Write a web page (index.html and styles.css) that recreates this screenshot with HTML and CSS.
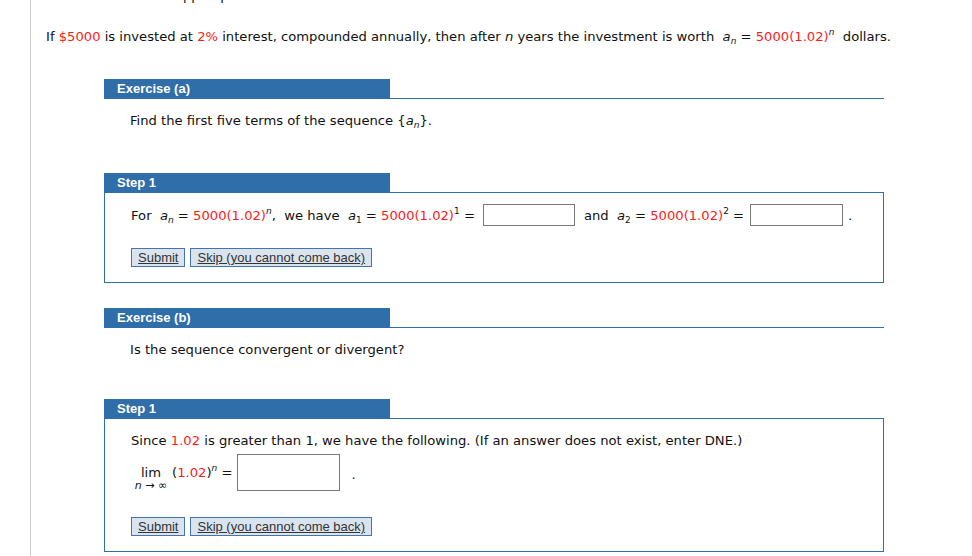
FILE: index.html
```html
<!DOCTYPE html>
<html>
<head>
<meta charset="utf-8">
<link rel="stylesheet" href="styles.css">
</head>
<body>
<div class="page">
  <p class="cut">come back to the skipped part.</p>
  <p class="intro">If <span class="r">$5000</span> is invested at <span class="r">2%</span> interest, compounded annually, then after <i>n</i> years the investment is worth &nbsp;<i>a</i><sub><i>n</i></sub> = <span class="r">5000(1.02)</span><sup><i>n</i></sup>&nbsp; dollars.</p>

  <section class="exercise ex-a">
    <div class="ex-head"><div class="bar">Exercise (a)</div></div>
    <p class="prompt">Find the first five terms of the sequence {<i>a</i><sub><i>n</i></sub>}.</p>
    <div class="step">
      <div class="bar">Step 1</div>
      <div class="box">
        <div class="row">
          <span>For &nbsp;<i>a</i><sub><i>n</i></sub> = <span class="r">5000(1.02)</span><sup><i>n</i></sup>, &nbsp;we have &nbsp;<i>a</i><sub>1</sub> = <span class="r">5000(1.02)</span><sup>1</sup> =</span>
          <span class="inp w1"></span>
          <span class="and">and &nbsp;<i>a</i><sub>2</sub> = <span class="r">5000(1.02)</span><sup>2</sup> =</span>
          <span class="inp w2"></span>
          <span class="dot">.</span>
        </div>
        <div class="btns">
          <span class="btn">Submit</span>
          <span class="btn">Skip (you cannot come back)</span>
        </div>
      </div>
    </div>
  </section>

  <section class="exercise ex-b">
    <div class="ex-head"><div class="bar">Exercise (b)</div></div>
    <p class="prompt">Is the sequence convergent or divergent?</p>
    <div class="step step-b">
      <div class="bar">Step 1</div>
      <div class="box">
        <p class="since">Since <span class="r">1.02</span> is greater than 1, we have the following. (If an answer does not exist, enter DNE.)</p>
        <div class="limrow">
          <span class="lim"><span class="lim-top">lim</span><span class="lim-sub"><i>n</i>&nbsp;→&nbsp;∞</span></span>
          <span class="limexpr">(<span class="r">1.02</span>)<sup><i>n</i></sup> =</span>
          <span class="inp w3"></span>
          <span class="dot2">.</span>
        </div>
        <div class="btns">
          <span class="btn">Submit</span>
          <span class="btn">Skip (you cannot come back)</span>
        </div>
      </div>
    </div>
  </section>
</div>
</body>
</html>
```

FILE: styles.css
```css
html, body {
  margin: 0;
  padding: 0;
  background: #fff;
}
body {
  font-family: "DejaVu Sans", Verdana, sans-serif;
  font-size: 13.15px;
  color: #111;
}
.page {
  margin-left: 30px;
  border-left: 1px solid #cccccc;
  padding-left: 15px;
  min-height: 556px;
  box-sizing: border-box;
  overflow: hidden;
}
p { margin: 0; }
.cut {
  line-height: 16px;
  margin-top: -12px;
}
.intro {
  line-height: 16px;
  margin-top: 25px;
  white-space: nowrap;
}
.r { color: #ff1a1a; }
i { font-style: italic; }
sub, sup {
  font-size: 9px;
  line-height: 0;
}
sub { vertical-align: -3px; }
sup { vertical-align: 6px; }

.exercise {
  margin-left: 58px;
  width: 780px;
}
.ex-a { margin-top: 34px; }
.ex-b { margin-top: 25px; }
.ex-head {
  border-bottom: 1px solid #2f6ea8;
}
.bar {
  width: 286px;
  height: 19px;
  line-height: 19px;
  background: #2f6ea8;
  color: #fff;
  font-family: "Liberation Sans", Arial, sans-serif;
  font-weight: bold;
  font-size: 13px;
  padding-left: 13px;
  box-sizing: border-box;
}
.prompt {
  line-height: 16px;
  margin-top: 14px;
  padding-left: 26px;
}
.step { margin-top: 44px; }
.step-b { margin-top: 41px; }
.box {
  border: 1px solid #2f6ea8;
  padding: 11px 0 15px 26px;
}
.step-b .box { padding-top: 14px; padding-bottom: 15px; }
.row {
  display: flex;
  align-items: center;
  height: 22px;
  white-space: nowrap;
}
.inp {
  display: inline-block;
  border: 1px solid #7a7a7a;
  background: #fff;
  box-sizing: border-box;
  height: 22px;
}
.w1 { width: 92px; margin-left: 8px; }
.and { margin-left: 9px; }
.w2 { width: 93px; margin-left: 6px; }
.dot { margin-left: 5px; }
.btns {
  display: flex;
  gap: 5px;
  margin-top: 22px;
}
.step-b .btns { margin-top: 27px; }
.btn {
  display: inline-block;
  height: 19px;
  line-height: 17px;
  box-sizing: border-box;
  padding: 0 6px;
  border: 1px solid #4673a8;
  background: #dae4ee;
  color: #333;
  font-family: "Liberation Sans", Arial, sans-serif;
  font-size: 13px;
  text-decoration: underline;
}
.since {
  line-height: 16px;
}
.limrow {
  display: flex;
  align-items: center;
  height: 36px;
  margin-top: 5px;
}
.lim {
  display: inline-flex;
  flex-direction: column;
  align-items: center;
  align-self: flex-start;
  padding-top: 12px;
  width: 40px;
}
.lim-top { line-height: 14px; }
.lim-sub { font-size: 11px; line-height: 11px; }
.limexpr { margin-left: 1px; }
.w3 { width: 103px; height: 37px; margin-left: 5px; }
.dot2 { margin-left: 11px; margin-top: 4px; }
```
